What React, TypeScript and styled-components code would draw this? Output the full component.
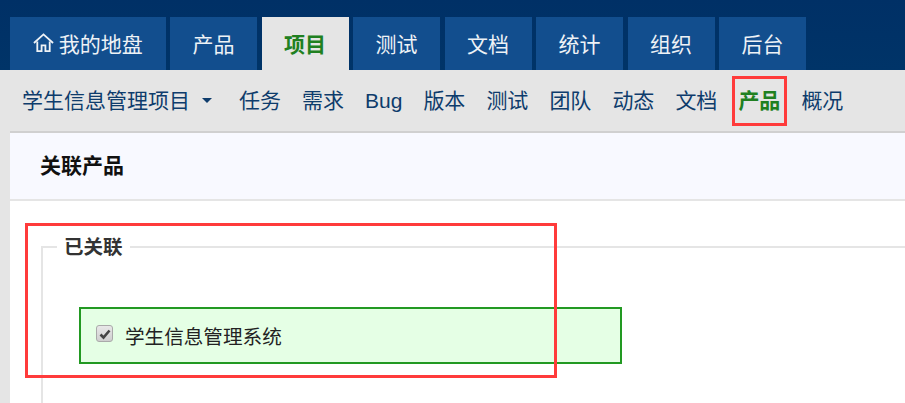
import React from 'react';
import styled, { createGlobalStyle } from 'styled-components';

const GlobalStyle = createGlobalStyle`
  html, body {
    margin: 0;
    padding: 0;
    height: 403px;
    overflow: hidden;
    background: #e5e5e5;
    font-family: "Liberation Sans", "Noto Sans CJK SC", sans-serif;
  }
`;

const Page = styled.div`
  position: relative;
  width: 905px;
  height: 403px;
  overflow: hidden;
  background: #e5e5e5;
`;

const TopBar = styled.nav`
  height: 53px;
  padding: 17px 0 0 10px;
  display: flex;
  gap: 4.5px;
  background: linear-gradient(#003066, #003468);
`;

const TopTab = styled.a<{ $active?: boolean; $width?: number }>`
  width: ${(p) => p.$width ?? 87}px;
  display: flex;
  align-items: center;
  justify-content: center;
  gap: 5px;
  font-size: 21px;
  padding-bottom: 2px;
  box-sizing: border-box;
  background: ${(p) => (p.$active ? '#e5e5e5' : '#124e8e')};
  color: ${(p) => (p.$active ? '#208020' : '#eef2f6')};
  font-weight: ${(p) => (p.$active ? 700 : 400)};
`;

const SubBar = styled.nav`
  height: 61px;
  padding-left: 22px;
  display: flex;
  align-items: center;
  font-size: 21px;
  line-height: 30px;
  color: #0e3c6c;
  box-sizing: border-box;
`;

const ProjectName = styled.a`
  display: flex;
  align-items: center;
  gap: 12px;
  margin-right: 27px;
`;

const Caret = styled.span`
  width: 0;
  height: 0;
  border-left: 5px solid transparent;
  border-right: 5px solid transparent;
  border-top: 5px solid #0e3c6c;
`;

const SubLinks = styled.div`
  display: flex;
  align-items: baseline;
  gap: 21px;
`;

const SubLink = styled.a<{ $active?: boolean }>`
  color: ${(p) => (p.$active ? '#208020' : '#0e3c6c')};
  font-weight: ${(p) => (p.$active ? 700 : 400)};
`;

const Panel = styled.section`
  margin-left: 10px;
  height: 272px;
  background: #fff;
  border-top: 2px solid #d0d0d0;
  box-sizing: border-box;
`;

const PanelHeader = styled.header`
  height: 68px;
  padding: 0 0 4px 30px;
  display: flex;
  align-items: center;
  box-sizing: border-box;
  background: #f8f9ff;
  border-bottom: 2px solid #e5e5e5;
  font-size: 21px;
  font-weight: 700;
  color: #111;
`;

const PanelBody = styled.div`
  padding: 31px 0 0 31px;
`;

const Group = styled.fieldset`
  margin: 0;
  padding: 45px 0 60px 36px;
  border: 0;
  border-top: 2px solid #e5e5e5;
  border-left: 2px solid #e5e5e5;
`;

const GroupTitle = styled.legend`
  margin-left: -22px;
  padding: 0 7px 0 7px;
  font-size: 19.5px;
  line-height: 30px;
  font-weight: 700;
  color: #333;
`;

const ProductRow = styled.label`
  width: 543px;
  height: 57px;
  padding-left: 15px;
  box-sizing: border-box;
  display: flex;
  align-items: center;
  gap: 12px;
  background: #e5ffe5;
  border: 2px solid #229922;
  font-size: 19.6px;
  color: #222;
`;

const CheckBox = styled.span`
  width: 15px;
  height: 15px;
  margin-bottom: 4px;
  display: flex;
  align-items: center;
  justify-content: center;
  background: linear-gradient(#e8e8e8, #cfcfcf);
  border: 1px solid #aaa;
  border-radius: 3px;
`;

const Annotation = styled.div<{ $x: number; $y: number; $w: number; $h: number }>`
  position: absolute;
  left: ${(p) => p.$x}px;
  top: ${(p) => p.$y}px;
  width: ${(p) => p.$w}px;
  height: ${(p) => p.$h}px;
  box-sizing: border-box;
  border: 3px solid #ff3b3b;
`;

const HomeIcon = () => (
  <svg width="21" height="21" viewBox="0 0 22 22" fill="none" stroke="#eef2f6" strokeWidth="1.9">
    <path d="M1 11.5 11 2.5l10 9" />
    <path d="M4.5 10v10h4.5v-6h4v6h4.5V10" />
  </svg>
);

const topTabs = ['产品', '项目', '测试', '文档', '统计', '组织', '后台'];
const subLinks = ['任务', '需求', 'Bug', '版本', '测试', '团队', '动态', '文档', '产品', '概况'];

export default function App() {
  return (
    <Page>
      <GlobalStyle />
      <TopBar>
        <TopTab $width={155.5}>
          <HomeIcon />
          我的地盘
        </TopTab>
        {topTabs.map((t) => (
          <TopTab key={t} $active={t === '项目'}>
            {t}
          </TopTab>
        ))}
      </TopBar>
      <SubBar>
        <ProjectName>
          学生信息管理项目
          <Caret />
        </ProjectName>
        <SubLinks>
          {subLinks.map((t, i) => (
            <SubLink key={i} $active={t === '产品'}>
              {t}
            </SubLink>
          ))}
        </SubLinks>
      </SubBar>
      <Panel>
        <PanelHeader>关联产品</PanelHeader>
        <PanelBody>
          <Group>
            <GroupTitle>已关联</GroupTitle>
            <ProductRow>
              <CheckBox>
                <svg width="12" height="12" viewBox="0 0 12 12" fill="none" stroke="#444" strokeWidth="2.6">
                  <path d="M1.5 6.5 4.5 9.5 10.5 2.5" />
                </svg>
              </CheckBox>
              学生信息管理系统
            </ProductRow>
          </Group>
        </PanelBody>
      </Panel>
      <Annotation $x={732} $y={76} $w={55} $h={50} />
      <Annotation $x={25} $y={223} $w={532} $h={155} />
    </Page>
  );
}
